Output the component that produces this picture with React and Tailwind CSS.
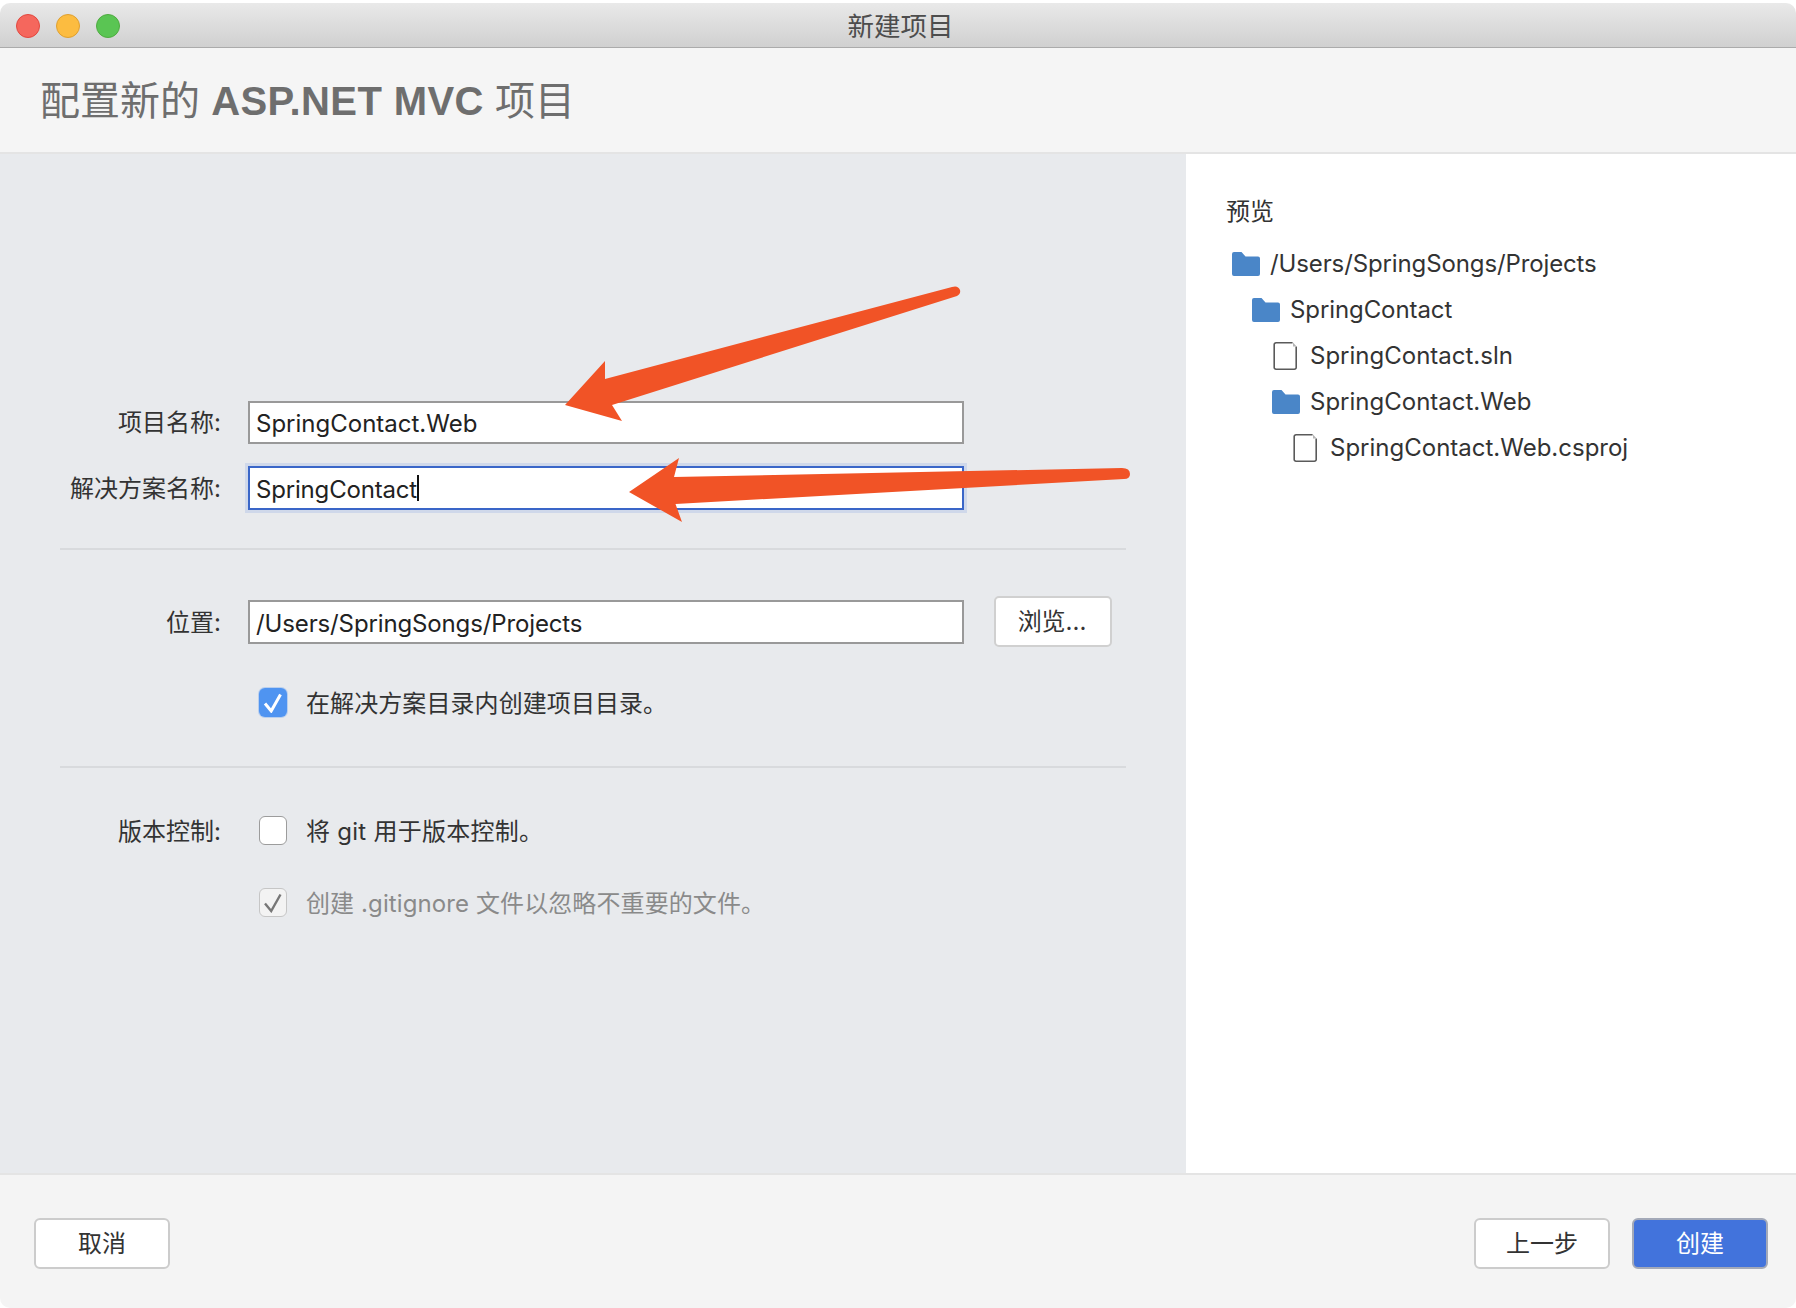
const FONT = 'font-["Inter","Noto_Sans_CJK_SC",sans-serif]'

const Folder = () => (
  <svg width="28" height="24" viewBox="0 0 28 24" className="shrink-0">
    <path d="M0 2a2 2 0 0 1 2-2h7.5l4 4.5H26a2 2 0 0 1 2 2V22a2 2 0 0 1-2 2H2a2 2 0 0 1-2-2z" fill="#4a86c8" />
  </svg>
)

const FileIcon = () => (
  <svg width="28" height="28" viewBox="0 0 28 28" className="shrink-0" fill="none">
    <path d="M20.6.8H4A1.8 1.8 0 0 0 2.2 2.6V25.4A1.8 1.8 0 0 0 4 27.2h18.4a1.8 1.8 0 0 0 1.8-1.8V4.4" stroke="#5a5a5a" strokeWidth="1.6" />
    <path d="M21 .4l3.6 4h-3.6z" fill="#b5b5b5" />
  </svg>
)

const Check = ({ color, weight }) => (
  <svg width="20" height="20" viewBox="0 0 20 20" fill="none">
    <path d="M2 10.5l6.2 7.5L17.5 1.5" stroke={color} strokeWidth={weight} />
  </svg>
)

const TreeRow = ({ icon, name, indent, track }) => (
  <div className={`flex h-[46px] items-center ${indent}`}>
    {icon === 'folder' ? <Folder /> : <FileIcon />}
    <span className={`ml-[10px] whitespace-nowrap text-[24px] text-[#333] ${track}`}>{name}</span>
  </div>
)

const Arrows = () => (
  <svg className="absolute top-0 left-0 pointer-events-none" width="1796" height="1308" viewBox="0 0 1796 1308">
    <path
      d="M565 405 L605 361 L605 379 L952 287 Q958 285 960 290 Q961 294 957 296 L612 405 L622 421 Z"
      fill="#f15326"
    />
    <path
      d="M629 492 L679 458 L674 477 L1122 468 Q1130 468 1130 474 Q1130 479 1124 479 L675.5 504 L682 522 Z"
      fill="#f15326"
    />
  </svg>
)

const App = () => {
  return (
    <div className={`relative h-[1308px] w-[1796px] overflow-hidden bg-white pt-[3px] ${FONT}`}>
      <div className="flex h-[1305px] flex-col overflow-hidden rounded-t-[10px] rounded-b-[10px]">
        {/* Title bar */}
        <div className="relative flex h-[45px] shrink-0 items-center justify-center border-b border-[#ababab] bg-gradient-to-b from-[#e9e9e9] to-[#d0d0d0] pt-[3px]">
          <div className="absolute top-[11px] left-[16px] flex gap-[16px]">
            <div className="h-[24px] w-[24px] rounded-full border border-[#e2483f] bg-[#f5675d]"></div>
            <div className="h-[24px] w-[24px] rounded-full border border-[#dfa030] bg-[#fcbc40]"></div>
            <div className="h-[24px] w-[24px] rounded-full border border-[#4fab40] bg-[#5ac553]"></div>
          </div>
          <span className="ml-[5px] text-[26.5px] leading-none text-[#4d4d4d]">新建项目</span>
        </div>

        {/* Header */}
        <div className="flex h-[106px] shrink-0 items-center border-b-2 border-[#e4e4e4] bg-[#f5f5f5] pt-[1px] pl-[40px]">
          <h1 className="whitespace-nowrap text-[40px] font-normal text-[#6e6e6e]">
            配置新的 <span className='font-["Liberation_Sans",sans-serif] font-bold tracking-[0.4px]'>ASP.NET MVC</span> 项目
          </h1>
        </div>

        {/* Main */}
        <div className="flex min-h-0 flex-1">
          <div className="w-[1186px] shrink-0 bg-[#e8eaed] pt-[247px] pl-[60px]">
            <div className="flex h-[43px] items-center">
              <label className="w-[161px] whitespace-nowrap text-right text-[24px] text-[#333]">项目名称:</label>
              <div className="ml-[27px] flex h-[43px] w-[716px] items-center border-2 border-[#999] bg-white pt-[3px] pl-[6px] text-[24px] text-[#222]">
                SpringContact.Web
              </div>
            </div>
            <div className="mt-[22px] flex h-[44px] items-center">
              <label className="w-[161px] whitespace-nowrap pt-[2px] text-right text-[24px] text-[#333]">解决方案名称:</label>
              <div className="ml-[27px] flex h-[44px] w-[716px] items-center border-2 border-[#3a66c8] bg-white pt-[4px] pl-[6px] text-[24px] tracking-[-0.18px] text-[#222] shadow-[0_0_0_3px_#cfd8ea]">
                SpringContact
                <span className="mb-[4px] h-[26px] w-[2px] bg-[#111]"></span>
              </div>
            </div>
            <div className="mt-[38px] h-[2px] w-[1066px] bg-[#d8dadd]"></div>
            <div className="mt-[46px] flex h-[51px] items-center">
              <label className="w-[161px] whitespace-nowrap pt-[2px] text-right text-[24px] text-[#333]">位置:</label>
              <div className="ml-[27px] flex h-[44px] w-[716px] items-center border-2 border-[#999] bg-white pt-[4px] pl-[6px] text-[24px] tracking-[-0.13px] text-[#222]">
                /Users/SpringSongs/Projects
              </div>
              <button className="ml-[30px] h-[51px] w-[118px] rounded-[5px] border-2 border-[#d0d0d0] bg-white pr-[2px] text-[24px] text-[#333]">
                浏览...
              </button>
            </div>
            <div className="mt-[41px] flex h-[29px] items-center pl-[199px]">
              <div className="flex h-[29px] w-[28px] items-center justify-center rounded-[6px] bg-[#4f94f1] shadow-[0_0_0_1px_#b9cfee]">
                <Check color="#fff" weight="3" />
              </div>
              <span className="ml-[19px] whitespace-nowrap pt-[2px] text-[24px] tracking-[0.08px] text-[#333]">在解决方案目录内创建项目目录。</span>
            </div>
            <div className="mt-[49px] h-[2px] w-[1066px] bg-[#d8dadd]"></div>
            <div className="mt-[48px] flex h-[29px] items-center">
              <label className="w-[161px] whitespace-nowrap pt-[2px] text-right text-[24px] text-[#333]">版本控制:</label>
              <div className="ml-[38px] h-[29px] w-[28px] rounded-[6px] border border-[#9c9c9c] bg-white"></div>
              <span className="ml-[19px] whitespace-nowrap pt-[2px] text-[24px] tracking-[0.25px] text-[#333]">将 git 用于版本控制。</span>
            </div>
            <div className="mt-[43px] flex h-[29px] items-center pl-[199px]">
              <div className="flex h-[29px] w-[28px] items-center justify-center rounded-[6px] border border-[#c6c6c6] bg-[#f3f3f3]">
                <Check color="#777" weight="2.4" />
              </div>
              <span className="ml-[19px] whitespace-nowrap pt-[2px] text-[24px] tracking-[0.1px] text-[#8a8a8a]">创建 .gitignore 文件以忽略不重要的文件。</span>
            </div>
          </div>

          {/* Preview */}
          <div className="flex-1 bg-white pt-[42px] pl-[40px]">
            <div className="text-[24px] leading-[32px] text-[#333]">预览</div>
            <div className="mt-[13px] ml-[6px]">
              <TreeRow icon="folder" name="/Users/SpringSongs/Projects" indent="pl-0" track="tracking-[-0.12px]" />
              <TreeRow icon="folder" name="SpringContact" indent="pl-[20px]" track="tracking-[-0.09px]" />
              <TreeRow icon="file" name="SpringContact.sln" indent="pl-[40px]" track="" />
              <TreeRow icon="folder" name="SpringContact.Web" indent="pl-[40px]" track="" />
              <TreeRow icon="file" name="SpringContact.Web.csproj" indent="pl-[60px]" track="" />
            </div>
          </div>
        </div>

        {/* Footer */}
        <div className="flex h-[135px] shrink-0 items-start justify-between border-t-2 border-[#e4e4e4] bg-[#f4f4f4] pt-[43px] pr-[28px] pl-[34px]">
          <button className="h-[51px] w-[136px] rounded-[6px] border-2 border-[#cccccc] bg-white text-[24px] text-[#333]">取消</button>
          <div className="flex gap-[22px]">
            <button className="h-[51px] w-[136px] rounded-[6px] border-2 border-[#cccccc] bg-white text-[24px] text-[#333]">上一步</button>
            <button className="h-[51px] w-[136px] rounded-[6px] border-2 border-[#a3a9b8] bg-[#4273dc] text-[24px] text-white">创建</button>
          </div>
        </div>
      </div>
      <Arrows />
    </div>
  )
}

export default App
